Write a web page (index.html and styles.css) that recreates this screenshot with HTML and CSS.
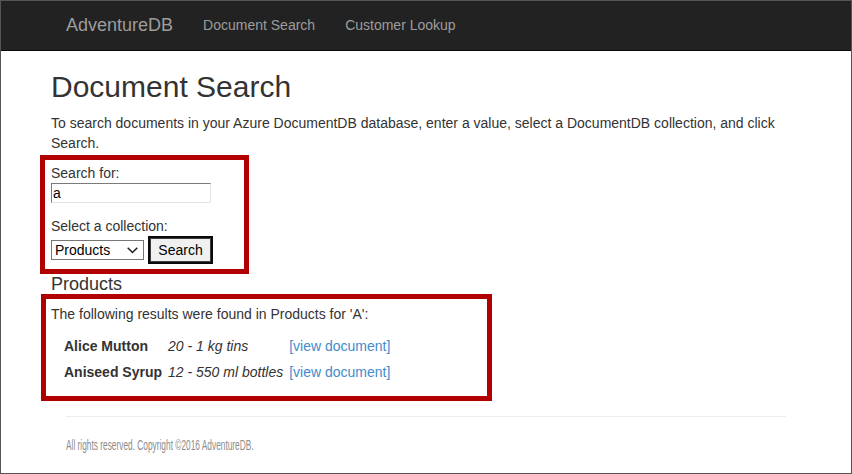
FILE: index.html
```html
<!DOCTYPE html>
<html lang="en">
<head>
<meta charset="utf-8">
<title>Document Search - AdventureDB</title>
<link rel="stylesheet" href="styles.css">
</head>
<body>
<div class="frame">
  <nav class="navbar">
    <div class="nav-inner">
      <a class="brand" href="#">AdventureDB</a>
      <a class="nav-link" href="#">Document Search</a>
      <a class="nav-link" href="#">Customer Lookup</a>
    </div>
  </nav>
  <main class="container">
    <h2 class="title">Document Search</h2>
    <p class="intro">To search documents in your Azure DocumentDB database, enter a value, select a DocumentDB collection, and click Search.</p>
    <form class="search-form">
      <span class="annot annot-form"></span>
      <label class="lbl" for="q">Search for:</label>
      <input class="text-input" id="q" type="text" value="a">
      <label class="lbl lbl-second" for="coll">Select a collection:</label>
      <div class="form-row">
        <select class="select" id="coll">
          <option>Products</option>
          <option>Customers</option>
        </select>
        <button class="btn" type="button">Search</button>
      </div>
    </form>
    <h4 class="results-title">Products</h4>
    <section class="results">
      <span class="annot annot-results"></span>
      <p class="results-intro">The following results were found in Products for 'A':</p>
      <table class="results-table">
        <tr>
          <td class="name">Alice Mutton</td>
          <td class="qty">20 - 1 kg tins</td>
          <td><a class="doc-link" href="#">[view document]</a></td>
        </tr>
        <tr>
          <td class="name">Aniseed Syrup</td>
          <td class="qty">12 - 550 ml bottles</td>
          <td><a class="doc-link" href="#">[view document]</a></td>
        </tr>
      </table>
    </section>
  </main>
  <footer class="footer">
    <hr class="rule">
    <p class="copy">All rights reserved. Copyright ©2016 AdventureDB.</p>
  </footer>
</div>
</body>
</html>
```

FILE: styles.css
```css
html, body {
  margin: 0;
  padding: 0;
  height: 100%;
}

body {
  font-family: "Liberation Sans", Arial, sans-serif;
  font-size: 14px;
  line-height: 20px;
  color: #333;
  background: #fff;
}

.frame {
  box-sizing: border-box;
  min-height: 100vh;
  border: 1px solid #555;
}

.navbar {
  box-sizing: border-box;
  height: 50px;
  background: #222;
  border-bottom: 1px solid #080808;
}

.nav-inner {
  width: 750px;
  margin: 0 auto;
  display: flex;
  align-items: center;
}

.brand {
  font-size: 18px;
  line-height: 20px;
  padding: 14px 15px 15px 15px;
  color: #9d9d9d;
  text-decoration: none;
}

.nav-link {
  font-size: 14px;
  line-height: 20px;
  padding: 14px 15px 15px 15px;
  color: #9d9d9d;
  text-decoration: none;
}

.container {
  width: 750px;
  margin: 0 auto;
}

.title {
  font-size: 30px;
  font-weight: 500;
  line-height: 33px;
  margin: 19px 0 10px 0;
}

.intro {
  margin: 0 0 10px 0;
}

.search-form {
  position: relative;
  margin: 0;
}

.lbl {
  display: block;
  font-weight: normal;
}

.lbl-second {
  margin-top: 13px;
}

.text-input {
  display: block;
  box-sizing: border-box;
  width: 160px;
  height: 20px;
  margin: 0;
  padding: 1px 1px;
  font-family: "Liberation Sans", Arial, sans-serif;
  font-size: 14px;
  color: #000;
  border: 1px solid;
  border-color: #7a7a7a #e3e3e3 #e3e3e3 #7a7a7a;
  outline: none;
}

.form-row {
  display: flex;
  align-items: center;
  gap: 4px;
  height: 28px;
}

.select {
  box-sizing: border-box;
  width: 93px;
  height: 20px;
  margin: 0;
  padding: 0 0 0 3px;
  font-family: "Liberation Sans", Arial, sans-serif;
  font-size: 14px;
  color: #000;
  background: #fff url("data:image/svg+xml;utf8,<svg xmlns='http://www.w3.org/2000/svg' width='11' height='7' viewBox='0 0 11 7'><path d='M0.7 0.7 L5.5 5.5 L10.3 0.7' fill='none' stroke='%23222' stroke-width='1.5'/></svg>") no-repeat right 5px center;
  border: 1px solid #767676;
  border-radius: 0;
  -webkit-appearance: none;
  appearance: none;
  outline: none;
}

.btn {
  box-sizing: border-box;
  width: 65px;
  height: 28px;
  margin: 0;
  padding: 0;
  font-family: "Liberation Sans", Arial, sans-serif;
  font-size: 14px;
  color: #000;
  background: #f0f0f0;
  border: 2px solid #0a0a0a;
  box-shadow: inset 0 0 0 1px #3c3c3c;
  border-radius: 0;
}

.results-title {
  font-size: 18px;
  font-weight: 500;
  line-height: 20px;
  margin: 10px 0 10px 0;
}

.results {
  position: relative;
}

.results-intro {
  margin: 0 0 9px 0;
}

.results-table {
  border-collapse: collapse;
  margin: 0 0 0 10px;
}

.results-table td {
  padding: 3px 3px;
  vertical-align: middle;
  white-space: nowrap;
}

.name {
  font-weight: bold;
}

.qty {
  font-style: italic;
}

.doc-link {
  color: #428bca;
  text-decoration: none;
}

.annot {
  position: absolute;
  box-sizing: border-box;
  border: 5px solid #b20000;
  pointer-events: none;
}

.annot-form {
  top: -8px;
  left: -11px;
  width: 209px;
  height: 119px;
}

.annot-results {
  top: -10px;
  left: -10px;
  width: 451px;
  height: 107px;
}

.footer {
  width: 720px;
  margin: 0 auto;
  padding: 11px 15px 0 15px;
}

.rule {
  margin: 20px 0 18px 0;
  border: 0;
  border-top: 1px solid #eee;
  height: 0;
}

.copy {
  margin: 0;
  color: #8c8c8c;
  white-space: nowrap;
  transform: scaleX(0.595);
  transform-origin: left center;
}
```
